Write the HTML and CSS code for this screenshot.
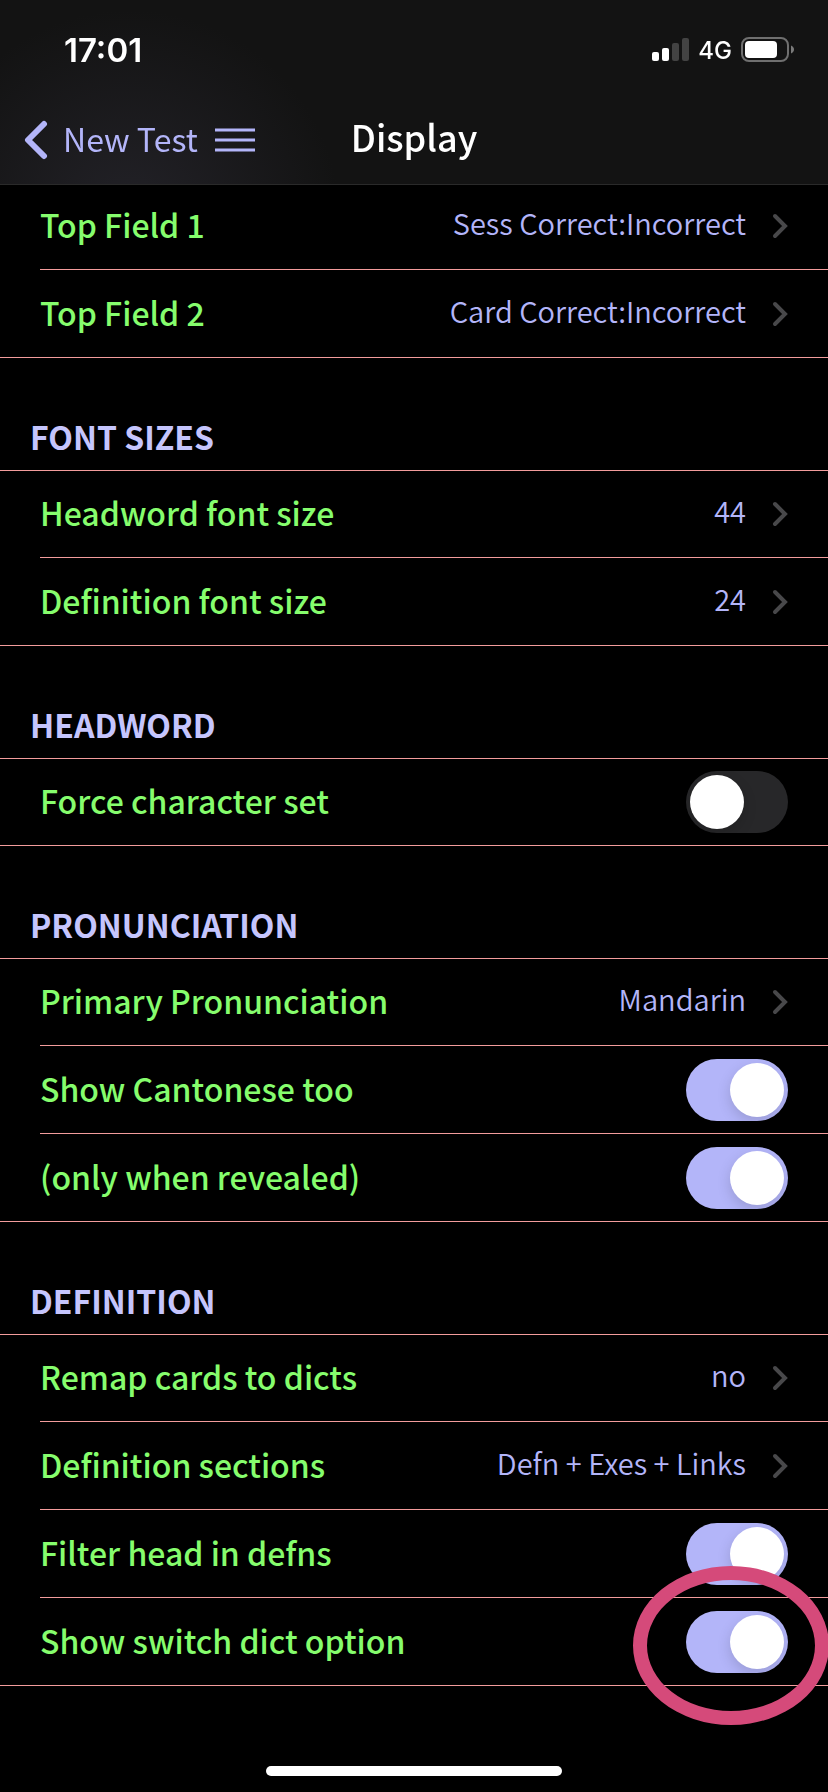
FILE: index.html
```html
<!DOCTYPE html>
<html lang="en">
<head>
    <meta charset="utf-8">
    <meta name="viewport" content="width=device-width">
    <title>Display</title>
    <link rel="stylesheet" href="styles.css">
</head>
<body>
    <svg class="symbols" aria-hidden="true">
        <symbol id="chevron" viewBox="0 0 16 26">
            <path d="M3 3 L13 13 L3 23" fill="none" stroke="currentColor" stroke-width="4" stroke-linecap="round"/>
        </symbol>
    </svg>

    <header class="top-bar">
        <div class="status">
            <span class="time">17:01</span>
            <div class="status-icons">
                <svg width="37" height="24" viewBox="0 0 37 24" aria-hidden="true">
                    <rect x="0" y="14" width="7" height="9" rx="2" fill="#fff"/>
                    <rect x="10" y="10" width="7" height="13" rx="2" fill="#fff"/>
                    <rect x="20" y="5" width="7" height="18" rx="2" fill="#434343"/>
                    <rect x="30" y="0" width="7" height="23" rx="2" fill="#434343"/>
                </svg>
                <span class="network">4G</span>
                <svg width="53" height="26" viewBox="0 0 53 26" aria-hidden="true">
                    <rect x="1" y="1" width="46" height="23" rx="7" fill="none" stroke="#6f6f6f" stroke-width="2"/>
                    <rect x="4" y="4" width="32" height="17" rx="4" fill="#fff"/>
                    <path d="M50 8.500 C54 10 54 15 50 16.500 Z" fill="#7a7a7a"/>
                </svg>
            </div>
        </div>
        <nav class="nav">
            <div class="nav-left">
                <a class="back" href="#">
                    <svg width="24" height="40" viewBox="0 0 24 40" aria-hidden="true">
                        <path d="M20 4 L4 20 L20 36" fill="none" stroke="currentColor" stroke-width="6" stroke-linecap="round" stroke-linejoin="round"/>
                    </svg>
                    <span class="back-text">New Test</span>
                </a>
                <button class="menu" type="button" aria-label="Menu">
                    <svg width="40" height="24" viewBox="0 0 40 24" aria-hidden="true">
                        <path d="M0 2h40M0 12h40M0 22h40" stroke="currentColor" stroke-width="3"/>
                    </svg>
                </button>
            </div>
            <h1>Display</h1>
        </nav>
    </header>

    <main class="settings">
        <section class="group">
            <a class="row" href="#"><span class="label">Top Field 1</span><span class="value">Sess Correct:Incorrect</span><svg class="chevron"><use href="#chevron"/></svg></a>
            <a class="row" href="#"><span class="label">Top Field 2</span><span class="value">Card Correct:Incorrect</span><svg class="chevron"><use href="#chevron"/></svg></a>
        </section>

        <h2>FONT SIZES</h2>
        <section class="group">
            <a class="row" href="#"><span class="label">Headword font size</span><span class="value">44</span><svg class="chevron"><use href="#chevron"/></svg></a>
            <a class="row" href="#"><span class="label">Definition font size</span><span class="value">24</span><svg class="chevron"><use href="#chevron"/></svg></a>
        </section>

        <h2>HEADWORD</h2>
        <section class="group">
            <div class="row"><label class="label" for="charset">Force character set</label><input class="switch" type="checkbox" id="charset"></div>
        </section>

        <h2>PRONUNCIATION</h2>
        <section class="group">
            <a class="row" href="#"><span class="label">Primary Pronunciation</span><span class="value">Mandarin</span><svg class="chevron"><use href="#chevron"/></svg></a>
            <div class="row"><label class="label" for="cantonese">Show Cantonese too</label><input class="switch" type="checkbox" id="cantonese" checked></div>
            <div class="row"><label class="label" for="revealed">(only when revealed)</label><input class="switch" type="checkbox" id="revealed" checked></div>
        </section>

        <h2>DEFINITION</h2>
        <section class="group">
            <a class="row" href="#"><span class="label">Remap cards to dicts</span><span class="value">no</span><svg class="chevron"><use href="#chevron"/></svg></a>
            <a class="row" href="#"><span class="label">Definition sections</span><span class="value">Defn + Exes + Links</span><svg class="chevron"><use href="#chevron"/></svg></a>
            <div class="row"><label class="label" for="filter">Filter head in defns</label><input class="switch" type="checkbox" id="filter" checked></div>
            <div class="row marked"><label class="label" for="switchdict">Show switch dict option</label><input class="switch" type="checkbox" id="switchdict" checked></div>
        </section>
    </main>

    <div class="home-indicator"></div>
</body>
</html>
```
FILE: styles.css
```css
*,
*::before,
*::after {
    box-sizing: border-box;
}
body {
    margin: 0;
    min-height: 100vh;
    overflow-x: hidden;
    background: #000;
    color: #fff;
    font-family: "Noto Sans CJK SC", sans-serif;
}
a {
    color: inherit;
    text-decoration: none;
}
.symbols {
    display: none;
}

/* top bar */
.top-bar {
    position: fixed;
    top: 0;
    left: 0;
    right: 0;
    z-index: 2;
    height: 185px;
    background: radial-gradient(circle at 130px 220px, #232228, #131313 210px);
    border-bottom: 1px solid #2a2a2a;
}
.status {
    display: flex;
    justify-content: space-between;
    align-items: center;
    height: 100px;
    padding: 0 34px 0 64px;
    font-family: Inter, sans-serif;
}
.time {
    font-size: 33px;
    font-weight: 600;
}
.status-icons {
    display: flex;
    align-items: center;
    gap: 9px;
}
.network {
    font-size: 24px;
    font-weight: 500;
}
.nav {
    display: grid;
    grid-template-columns: 1fr auto 1fr;
    align-items: center;
    height: 80px;
    padding: 0 24px;
}
.nav-left {
    display: flex;
    align-items: center;
    gap: 17px;
    color: #b3b5f9;
}
.back {
    display: flex;
    align-items: center;
    gap: 15px;
    font-size: 32px;
    font-weight: 400;
    line-height: 40px;
}
.back-text {
    padding-bottom: 4px;
}
.menu {
    display: flex;
    padding: 0;
    border: 0;
    background: none;
    color: inherit;
}
h1 {
    margin: 0;
    padding-bottom: 8px;
    font-size: 36px;
    font-weight: 500;
    line-height: 40px;
}

/* settings list */
.settings {
    padding: 182px 0 106px;
}
h2 {
    display: flex;
    align-items: flex-end;
    height: 112px;
    margin: 0;
    padding: 0 30px 14px;
    color: #c5c5fd;
    font-size: 32px;
    font-weight: 700;
    line-height: 40px;
}
.group {
    border-top: 1px solid #f39c9c;
    border-bottom: 1px solid #f39c9c;
}
.row {
    display: flex;
    align-items: center;
    position: relative;
    height: 88px;
    margin-left: 40px;
    padding-right: 40px;
    border-top: 1px solid #f39c9c;
}
.row:first-child {
    height: 86px;
    border-top: 0;
}
.label {
    flex: 1;
    padding-bottom: 4px;
    color: #86fd6d;
    font-size: 32px;
    font-weight: 500;
    line-height: 40px;
}
.value {
    padding-bottom: 8px;
    color: #b3b5f9;
    font-size: 29px;
    font-weight: 350;
    line-height: 40px;
}
.chevron {
    width: 16px;
    height: 26px;
    margin-left: 26px;
    color: #48484a;
}
.switch {
    appearance: none;
    display: flex;
    width: 102px;
    height: 62px;
    margin: 0;
    padding: 4px;
    border-radius: 31px;
    background: #272729;
}
.switch::before {
    content: "";
    width: 54px;
    height: 54px;
    border-radius: 50%;
    background: #fff;
    box-shadow: 0 5px 14px rgba(0, 0, 0, 0.15);
}
.switch:checked {
    justify-content: flex-end;
    background: #b3b5f9;
}

/* ring drawn over the last switch */
.marked::after {
    content: "";
    position: absolute;
    top: -32px;
    right: -1px;
    width: 196px;
    height: 159px;
    border: 14px solid #d54a7a;
    border-radius: 50%;
    pointer-events: none;
}

.home-indicator {
    position: fixed;
    bottom: 16px;
    left: 0;
    right: 0;
    width: 296px;
    height: 10px;
    margin: 0 auto;
    border-radius: 5px;
    background: #fff;
}
```
